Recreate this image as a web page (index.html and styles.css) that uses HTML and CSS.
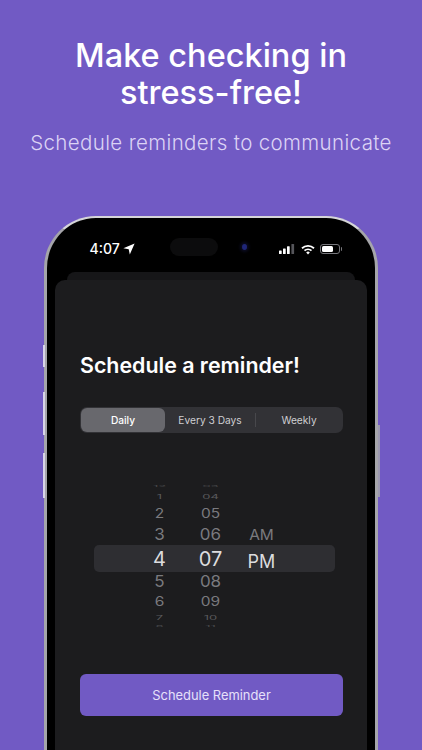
FILE: index.html
```html
<!DOCTYPE html>
<html lang="en">
<head>
<meta charset="utf-8">
<title>Make checking in stress-free!</title>
<link rel="stylesheet" href="styles.css">
</head>
<body>
<header class="hero">
  <h1 class="hero-title">Make checking in<br>stress-free!</h1>
  <p class="hero-sub">Schedule reminders to communicate</p>
</header>
<div class="phone">
  <span class="side side-mute"></span>
  <span class="side side-up"></span>
  <span class="side side-down"></span>
  <span class="side side-power"></span>
  <div class="status">
    <div class="status-left">
      <span class="clock">4:07</span>
      <svg class="loc" viewBox="0 0 12 12"><path d="M11.6.4 .4 5.3 5.7 6.3 6.8 11.6Z" fill="#fff"/></svg>
    </div>
    <div class="island"><span class="cam"></span></div>
    <div class="status-right">
      <svg class="signal" viewBox="0 0 16 10"><rect x="0" y="6.5" width="2.7" height="3.5" rx=".6" fill="#fff"/><rect x="4" y="4.4" width="2.7" height="5.6" rx=".6" fill="#fff"/><rect x="8" y="2.2" width="2.7" height="7.8" rx=".6" fill="#fff"/><rect x="12.4" y="0" width="2.7" height="10" rx=".6" fill="#55555a"/></svg>
      <svg class="wifi" viewBox="0 0 14 11"><path d="M.4 3.6a9.4 9.4 0 0 1 13.2 0L12.4 4.9a7.7 7.7 0 0 0-10.8 0Z" fill="#fff"/><path d="M2.9 6.1a5.9 5.9 0 0 1 8.2 0L9.9 7.3a4.2 4.2 0 0 0-5.8 0Z" fill="#fff"/><path d="M5.2 8.4a2.6 2.6 0 0 1 3.6 0L7 10.6Z" fill="#fff"/></svg>
      <div class="battery"><span class="battery-level"></span></div>
    </div>
  </div>
  <div class="sheet-back"></div>
  <main class="sheet">
    <h2 class="sheet-title">Schedule a reminder!</h2>
    <div class="segments">
      <span class="segment segment-active">Daily</span>
      <span class="segment segment-mid">Every 3 Days</span>
      <span class="divider"></span>
      <span class="segment">Weekly</span>
    </div>
    <div class="picker">
      <div class="picker-band"></div>
      <div class="wheel">
        <span class="item r0">12</span><span class="item r1">1</span><span class="item r2">2</span><span class="item r3">3</span><span class="item r4">4</span><span class="item r5">5</span><span class="item r6">6</span><span class="item r7">7</span><span class="item r0">8</span>
      </div>
      <div class="wheel">
        <span class="item r0">03</span><span class="item r1">04</span><span class="item r2">05</span><span class="item r3">06</span><span class="item r4">07</span><span class="item r5">08</span><span class="item r6">09</span><span class="item r7">10</span><span class="item r0">11</span>
      </div>
      <div class="wheel wheel-ampm">
        <span class="item r0"></span><span class="item r1"></span><span class="item r2"></span><span class="item r3">AM</span><span class="item r4">PM</span>
      </div>
    </div>
    <button class="cta" type="button">Schedule Reminder</button>
  </main>
</div>
</body>
</html>
```
FILE: styles.css
```css
* { box-sizing: border-box; }
html, body { margin: 0; height: 750px; overflow: hidden; }
body { background: #715ac4; font-family: Inter, "Liberation Sans", sans-serif; }

.hero { height: 216px; padding-top: 37px; text-align: center; }
.hero-title { margin: 0; color: #fff; font-size: 32.5px; line-height: 37px; font-weight: 500; }
.hero-sub { margin: 19px 0 0; color: #dcd3f5; font-size: 20.5px; line-height: 26px; font-weight: 300; letter-spacing: .36px; white-space: nowrap; }

.phone { position: relative; width: 334px; height: 534px; margin-left: 44px; background: #000; border: solid #a5a5aa; border-width: 2px 3px 0; border-top-color: #d5d5d8; border-radius: 52px 52px 0 0; }
.side { position: absolute; width: 1.5px; background: #d8d4e8; }
.side-mute { left: -4px; top: 127px; height: 22px; }
.side-up { left: -4px; top: 174px; height: 43px; }
.side-down { left: -4px; top: 235px; height: 45px; }
.side-power { right: -4.5px; top: 207px; height: 72px; background: #9c98b0; }

.status { display: flex; align-items: center; height: 54px; padding: 8px 0 0 42.5px; }
.status-left { display: flex; align-items: center; gap: 3px; width: 80.5px; }
.clock { color: #fff; font-size: 14px; font-weight: 500; line-height: 18px; }
.loc { width: 12px; height: 12px; }
.island { display: flex; align-items: center; justify-content: flex-end; width: 48px; height: 18px; margin-top: -4px; background: #0c0c0d; border-radius: 9px; }
.cam { width: 5px; height: 6px; margin-right: -29px; border-radius: 50%; background: #1f2678; box-shadow: 0 0 3px 2px #0b0c22; }
.status-right { display: flex; align-items: center; margin-left: 61px; }
.signal { width: 16px; height: 10px; }
.wifi { width: 14px; height: 11px; margin-left: 6px; }
.battery { position: relative; width: 20px; height: 10px; margin-left: 5px; padding: 1px; border: 1px solid #77777c; border-radius: 3px; }
.battery::after { content: ""; position: absolute; right: -3px; top: 2px; width: 1.5px; height: 4px; background: #77777c; border-radius: 0 1px 1px 0; }
.battery-level { display: block; width: 11px; height: 100%; background: #fff; border-radius: 1.5px; }

.sheet-back { height: 8px; margin: 0 20px; background: #161618; border-radius: 8px 8px 0 0; }
.sheet { height: 472px; margin: 0 8px; padding: 70px 24px 0 25px; background: #1c1c1e; border-radius: 10px 10px 0 0; }
.sheet-title { margin: 0; color: #fff; font-size: 21.4px; line-height: 30px; font-weight: 600; white-space: nowrap; }

.segments { display: flex; align-items: center; height: 26px; margin-top: 27px; padding: 1px; background: #323236; border-radius: 7px; }
.segment { display: flex; align-items: center; justify-content: center; height: 24px; flex: 1 1 0; color: #cfcfd2; font-size: 10.2px; }
.segment-active { flex: 0 0 84px; background: #68686d; border-radius: 6px; color: #fff; font-weight: 500; }
.segment-mid { flex: 0 0 90px; }
.divider { width: 1px; height: 14px; background: #48484c; }

.picker { position: relative; display: flex; justify-content: center; height: 145px; margin-top: 51px; padding-right: 2px; }
.picker-band { position: absolute; left: 14px; right: 8px; top: 61px; height: 27px; background: #2e2e32; border-radius: 5px; }
.wheel { position: relative; display: flex; flex-direction: column; width: 51px; align-items: center; }
.item { display: flex; align-items: center; justify-content: center; color: #7a7a7e; font-size: 17px; line-height: 20px; }
.r0 { height: 5px; transform: scaleY(.15); color: #48484b; font-size: 13px; }
.r1 { height: 15px; transform: scaleY(.45); color: #59595c; font-size: 13px; }
.r2 { height: 19px; transform: scaleY(.8); font-size: 15.5px; }
.r3 { height: 24px; transform: scaleY(.95); }
.r4 { height: 27px; padding-top: 3px; color: #dcdcde; font-size: 20px; }
.r5 { height: 24px; transform: scaleY(.95); }
.r6 { height: 19px; transform: scaleY(.8); font-size: 15.5px; }
.r7 { height: 13px; transform: scaleY(.45); color: #59595c; font-size: 13px; }
.wheel-ampm .r3 { font-size: 15.5px; }
.wheel-ampm .r4 { font-size: 18px; }

.cta { display: block; width: 100%; height: 42px; margin-top: 45px; padding: 0; border: 0; border-radius: 6px; background: #715ac4; color: #e6e0fa; font-family: inherit; font-size: 12.9px; }
```
